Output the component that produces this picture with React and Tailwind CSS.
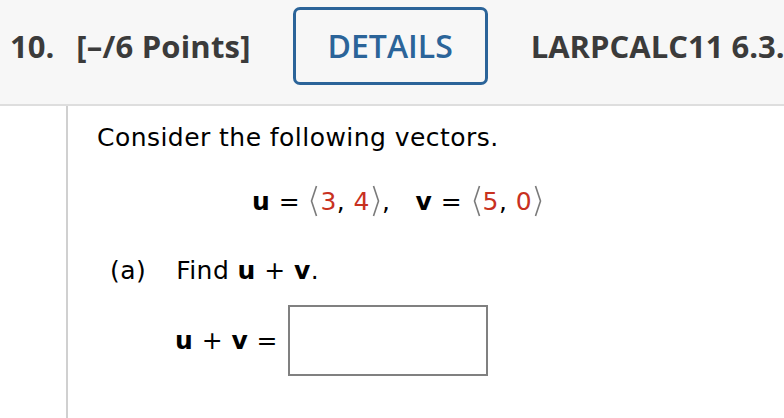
import React from 'react'

const Angle = ({ side }) => (
    <svg width="8" height="32" viewBox="0 0 8 32" className="inline-block align-[-7px] mx-[2px]">
        <polyline
            points={side === 'left' ? '6.5,1 1.5,16 6.5,31' : '1.5,1 6.5,16 1.5,31'}
            fill="none"
            stroke="#7a7a7a"
            strokeWidth="1.6"
        />
    </svg>
)

const Num = ({ children }) => <span className="text-[#c8311f]">{children}</span>

export default function App() {
    return (
        <div className="w-[784px] h-[418px] overflow-hidden bg-white font-['DejaVu_Sans',Verdana,sans-serif]">
            <div className="h-[106px] bg-[#f7f7f7] border-b-2 border-[#dedede] pt-[7px] whitespace-nowrap font-['Open_Sans',sans-serif] text-[31px] leading-none text-[#3b3b3b]">
                <div className="flex items-center h-[78px]">
                    <span className="shrink-0 ml-[10px] font-bold">10.</span>
                    <span className="shrink-0 ml-[22px] tracking-[0.2px] font-bold">[–/6 Points]</span>
                    <div className="shrink-0 ml-[42px] w-[195px] h-[78px] border-[3px] border-[#2b6499] rounded-[7px] flex items-center justify-center font-semibold text-[#2b6499] text-[32px]">
                        DETAILS
                    </div>
                    <span className="shrink-0 ml-[43px] font-bold">LARPCALC11 6.3.</span>
                </div>
            </div>
            <div className="flex h-[312px]">
                <div className="ml-[66px] w-[2px] bg-[#d0d0d0]"></div>
                <div className="pl-[29px] text-[25px] tracking-[0.45px] leading-[29px] text-black">
                    <p className="mt-[17px] whitespace-nowrap">Consider the following vectors.</p>
                    <p className="mt-[33px] pl-[155px] whitespace-nowrap">
                        <b>u</b> = <Angle side="left" />
                        <Num>3</Num>, <Num>4</Num>
                        <Angle side="right" />,&nbsp;&nbsp; <b>v</b> = <Angle side="left" />
                        <Num>5</Num>, <Num>0</Num>
                        <Angle side="right" />
                    </p>
                    <div className="mt-[39px] flex pl-[13px]">
                        <span>(a)</span>
                        <span className="ml-[30px]">
                            Find <b>u</b> + <b>v</b>.
                        </span>
                    </div>
                    <div className="mt-[20px] ml-[78px] flex items-center">
                        <span>
                            <b>u</b> + <b>v</b> =
                        </span>
                        <div className="ml-[10px] w-[200px] h-[71px] border-2 border-[#808080] bg-white"></div>
                    </div>
                </div>
            </div>
        </div>
    )
}
